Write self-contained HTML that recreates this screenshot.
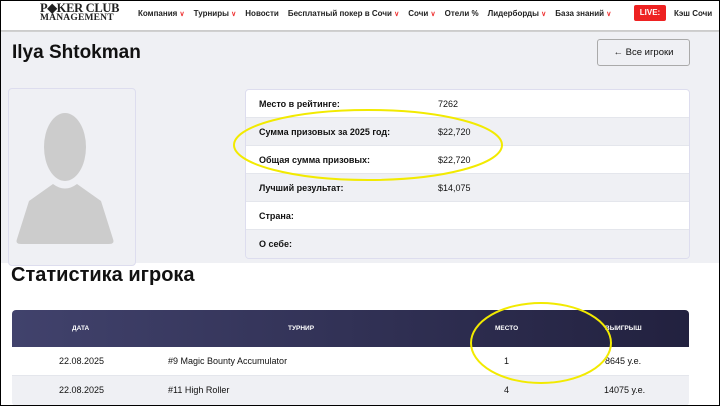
<!DOCTYPE html>
<html><head><meta charset="utf-8"><style>
*{margin:0;padding:0;box-sizing:border-box}
body{width:720px;height:406px;overflow:hidden;background:#fff;font-family:"Liberation Sans",sans-serif;position:relative;color:#111}
.frame{position:absolute;inset:0;border:1px solid #000;z-index:10;pointer-events:none}
.hdr{position:absolute;left:0;top:0;width:720px;height:31px;background:#fff;border-bottom:1px solid #ccc;box-shadow:0 1px 2px #bbb}
.logo{position:absolute;left:40px;top:3px;font-family:"Liberation Serif",serif;font-weight:bold;color:#222;line-height:10px}
.logo .a{font-size:12.5px;letter-spacing:-0.3px}
.logo .b{font-size:9.5px;letter-spacing:0.2px}
.nav{position:absolute;top:9px;font-size:8px;font-weight:bold;color:#222;white-space:nowrap}
.nav span{margin-right:9px}
.nav i{color:#e33;font-style:normal;font-size:7px}
.live{position:absolute;left:634px;top:5px;width:32px;height:16px;background:#ee2222;color:#fff;font-size:8px;font-weight:bold;text-align:center;line-height:16px;border-radius:2px}
.grey{position:absolute;left:0;top:32px;width:720px;height:231px;background:#eff0f4}
h1{position:absolute;left:12px;top:42px;font-size:19px;font-weight:bold}
.btn{position:absolute;left:597px;top:39px;width:93px;height:27px;border:1px solid #aaa;border-radius:3px;font-size:9.5px;text-align:center;line-height:25px;background:#eff0f4}
.card{position:absolute;left:8px;top:88px;width:128px;height:178px;border:1px solid #dde;border-radius:4px;background:#eff0f4}
.tbl{position:absolute;left:245px;top:89px;width:445px;height:170px;border:1px solid #dde;border-radius:4px;overflow:hidden}
.row{height:28px;font-size:9px;line-height:28px;position:relative;border-bottom:1px solid #e4e6ec}
.row b{position:absolute;left:13px;font-weight:bold}
.row span{position:absolute;left:192px}
.w{background:#fff}.g{background:#eff0f4}
h2{position:absolute;left:11px;top:264px;font-size:20px;font-weight:bold}
.st{position:absolute;left:12px;top:310px;width:677px;height:96px;border-radius:4px;overflow:hidden}
.th{height:37px;background:linear-gradient(90deg,#41426c,#22213f);color:#fff;font-size:6.5px;font-weight:bold;position:relative}
.th div,.tr div{position:absolute;top:0;line-height:37px}
.tr{height:29px;position:relative;font-size:9px}
.tr div{line-height:28px}
</style></head><body>
<div class="hdr">
 <div class="logo"><div class="a">P◆KER CLUB</div><div class="b">MANAGEMENT</div></div>
 <div class="nav" style="left:138px"><span>Компания <i>∨</i></span><span>Турниры <i>∨</i></span><span>Новости</span><span>Бесплатный покер в Сочи <i>∨</i></span><span>Сочи <i>∨</i></span><span>Отели %</span><span>Лидерборды <i>∨</i></span><span>База знаний <i>∨</i></span></div>
 <div class="live">LIVE:</div>
 <div class="nav" style="left:674px">Кэш Сочи</div>
</div>
<div class="grey"></div>
<h1>Ilya Shtokman</h1>
<div class="btn">← Все игроки</div>
<div class="card">
<svg width="128" height="178" viewBox="0 0 128 178"><ellipse cx="56" cy="58" rx="21" ry="34" fill="#ccc"/><path d="M44 95 Q56 104 68 95 L92 112 L104 150 Q106 155 100 155 L12 155 Q6 155 8 150 L20 112 Z" fill="#ccc"/></svg>
</div>
<div class="tbl">
 <div class="row w"><b>Место в рейтинге:</b><span>7262</span></div>
 <div class="row g"><b>Сумма призовых за 2025 год:</b><span>$22,720</span></div>
 <div class="row w"><b>Общая сумма призовых:</b><span>$22,720</span></div>
 <div class="row g"><b>Лучший результат:</b><span>$14,075</span></div>
 <div class="row w"><b>Страна:</b></div>
 <div class="row g" style="border:0"><b>О себе:</b></div>
</div>
<h2>Статистика игрока</h2>
<div class="st">
 <div class="th"><div style="left:60px">ДАТА</div><div style="left:276px">ТУРНИР</div><div style="left:483px">МЕСТО</div><div style="left:593px">ВЫИГРЫШ</div></div>
 <div class="tr w" style="border-bottom:1px solid #e4e6ec"><div style="left:47px">22.08.2025</div><div style="left:156px">#9 Magic Bounty Accumulator</div><div style="left:492px">1</div><div style="left:593px">8645 у.е.</div></div>
 <div class="tr g"><div style="left:47px">22.08.2025</div><div style="left:156px">#11 High Roller</div><div style="left:492px">4</div><div style="left:592px">14075 у.е.</div></div>
</div>
<svg style="position:absolute;left:0;top:0" width="720" height="406"><ellipse cx="368" cy="145" rx="134" ry="35" fill="none" stroke="#f2ea00" stroke-width="2"/><ellipse cx="541" cy="343" rx="70" ry="40" fill="none" stroke="#f2ea00" stroke-width="2"/></svg>
<div class="frame"></div>
</body></html>
